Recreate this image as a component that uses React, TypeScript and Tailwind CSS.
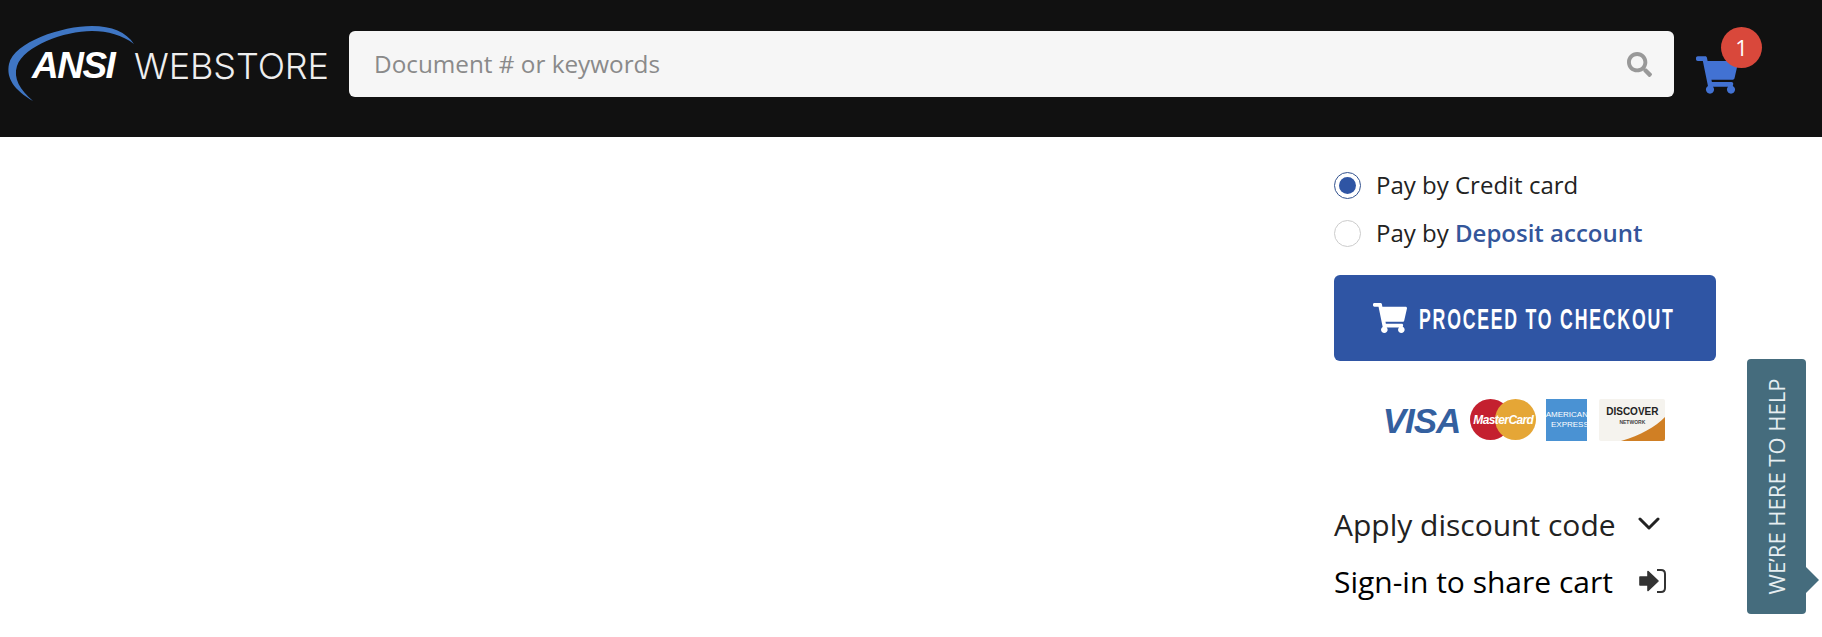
import React from 'react';
import { FaSearch, FaShoppingCart } from 'react-icons/fa';

const Logo: React.FC = () => (
  <div className="relative w-[330px] h-[100px] shrink-0">
    <svg className="absolute left-0 top-0" width="140" height="110" viewBox="0 0 140 110">
      <path d="M30 101 C11 90 3 78 6 64 C11 42 59 26 89 26 C109 26 123 32 131 44 C119 35 105 31 89 31 C61 31 21 46 14 66 C10 78 17 90 30 101 Z" fill="#3f76c4" />
    </svg>
    <span className="absolute left-[29px] top-[43px] font-['Liberation_Sans',sans-serif] font-bold italic text-[37px] leading-[46px] tracking-[-1.5px] text-white">ANSI</span>
    <span className="absolute left-[131px] top-[45px] font-['Inter',sans-serif] font-light text-[36px] leading-[42px] tracking-[-0.1px] text-[#eeeeee]">WEBSTORE</span>
  </div>
);

const CardLogos: React.FC = () => (
  <div className="flex items-center justify-center gap-[10px] h-[44px] -ml-[2px]">
    <span className="font-['Liberation_Sans',sans-serif] font-bold italic text-[35px] leading-none tracking-[-1px] text-[#34609f]">VISA</span>
    <div className="relative w-[66px] h-[42px] overflow-hidden">
      <div className="absolute left-0 top-0 w-[41px] h-[41px] rounded-full bg-[#c4202f]" />
      <div className="absolute right-0 top-0 w-[41px] h-[41px] rounded-full bg-[#e5a636]" />
      <span className="absolute inset-0 flex items-center justify-center font-['Liberation_Sans',sans-serif] font-bold italic text-[12px] tracking-[-0.6px] text-white whitespace-nowrap">MasterCard</span>
    </div>
    <div className="flex flex-col items-center justify-center w-[41px] h-[42px] bg-[#4a92d3] overflow-hidden font-['Liberation_Sans',sans-serif] text-[8px] leading-[10px] text-white whitespace-nowrap">
      <span>AMERICAN</span>
      <span className="ml-[6px]">EXPRESS</span>
    </div>
    <div className="relative w-[66px] h-[42px] ml-[2px] bg-[#f5f3ee] rounded-[2px] overflow-hidden">
      <svg className="absolute right-0 bottom-0" width="66" height="42" viewBox="0 0 66 42">
        <path d="M22 42 C42 36 56 28 66 18 L66 42 Z" fill="#d07f24" />
      </svg>
      <span className="absolute left-0 right-0 top-[7px] text-center font-['Liberation_Sans',sans-serif] font-bold text-[10px] leading-[12px] text-[#222]">DISCOVER</span>
      <span className="absolute left-0 right-0 top-[20px] text-center font-['Liberation_Sans',sans-serif] font-bold text-[5px] leading-[6px] text-[#444]">NETWORK</span>
    </div>
  </div>
);

const ChevronIcon: React.FC = () => (
  <svg width="22" height="14" viewBox="0 0 22 14" fill="none">
    <path d="M2 2 L11 11 L20 2" stroke="#222222" strokeWidth="3" strokeLinecap="round" strokeLinejoin="round" />
  </svg>
);

const SignInIcon: React.FC = () => (
  <svg width="27" height="24" viewBox="0 0 27 24" fill="none">
    <path d="M1 8 H9 V2.5 L19 12 L9 21.5 V16 H1 Z" fill="#333333" stroke="#333333" strokeWidth="1.6" strokeLinejoin="round" />
    <path d="M18 1 H22 C24.5 1 26 2.5 26 5 V19 C26 21.5 24.5 23 22 23 H18" stroke="#333333" strokeWidth="2" />
  </svg>
);

const App: React.FC = () => {
  return (
    <div className="relative h-[637px] bg-white overflow-hidden font-['Open_Sans',sans-serif]">
      <header className="flex items-start h-[137px] bg-[#111111] pl-[3px]">
        <Logo />
        <div className="flex items-center justify-between w-[1325px] h-[66px] mt-[31px] ml-[16px] pl-[25px] pr-[22px] pt-[1px] bg-[#f6f6f6] rounded-[6px]">
          <span className="text-[24.3px] text-[#8a8a8a]">Document # or keywords</span>
          <FaSearch className="text-[#999999]" size={25} />
        </div>
        <div className="relative ml-[22px] mt-[54px] w-[44px] h-[40px]">
          <FaShoppingCart className="text-[#4272d3]" size={42} />
          <span className="absolute left-[25px] top-[-27px] flex items-center justify-center w-[41px] h-[41px] rounded-full bg-[#d9483b] text-[22px] text-white">1</span>
        </div>
      </header>

      <main className="flex justify-end pr-[106px]">
        <div className="w-[382px] pt-[24px]">
          <label className="flex items-center gap-[15px] h-[48px]">
            <span className="flex items-center justify-center w-[27px] h-[27px] rounded-full border border-[#34538f]">
              <span className="w-[17px] h-[17px] rounded-full bg-[#2f55a4]" />
            </span>
            <span className="text-[24px] text-[#222222]">Pay by Credit card</span>
          </label>
          <label className="flex items-center gap-[15px] h-[48px]">
            <span className="w-[27px] h-[27px] rounded-full border border-[#cccccc]" />
            <span className="text-[24px] text-[#222222]">Pay by <span className="font-semibold text-[#34569b]">Deposit account</span></span>
          </label>
          <button className="flex items-center w-full h-[86px] mt-[18px] pl-[39px] gap-[12px] bg-[#2f55a4] rounded-[6px] text-white">
            <FaShoppingCart size={34} />
            <span className="block w-[255px] text-left whitespace-nowrap origin-left scale-x-[0.59] font-['Liberation_Sans',sans-serif] font-bold text-[30px] tracking-[3px]">PROCEED TO CHECKOUT</span>
          </button>
          <div className="mt-[37px]">
            <CardLogos />
          </div>
          <div className="flex items-center gap-[22px] mt-[62px] h-[40px] text-[30px] text-[#222222]">
            <span>Apply discount code</span>
            <ChevronIcon />
          </div>
          <div className="flex items-center gap-[26px] mt-[17px] h-[40px] text-[30px] text-black">
            <span>Sign-in to share cart</span>
            <SignInIcon />
          </div>
        </div>
      </main>

      <div className="absolute left-[1747px] top-[359px] flex items-center justify-center w-[59px] h-[255px] bg-[#456c7d] rounded-[4px]">
        <span className="-rotate-90 whitespace-nowrap font-['Open_Sans',sans-serif] font-medium text-[22px] text-[#e6eef1]">WE’RE HERE TO HELP</span>
        <span className="absolute right-[-13px] top-[208px] w-0 h-0 border-y-[13px] border-y-transparent border-l-[13px] border-l-[#456c7d]" />
      </div>
    </div>
  );
};

export default App;
